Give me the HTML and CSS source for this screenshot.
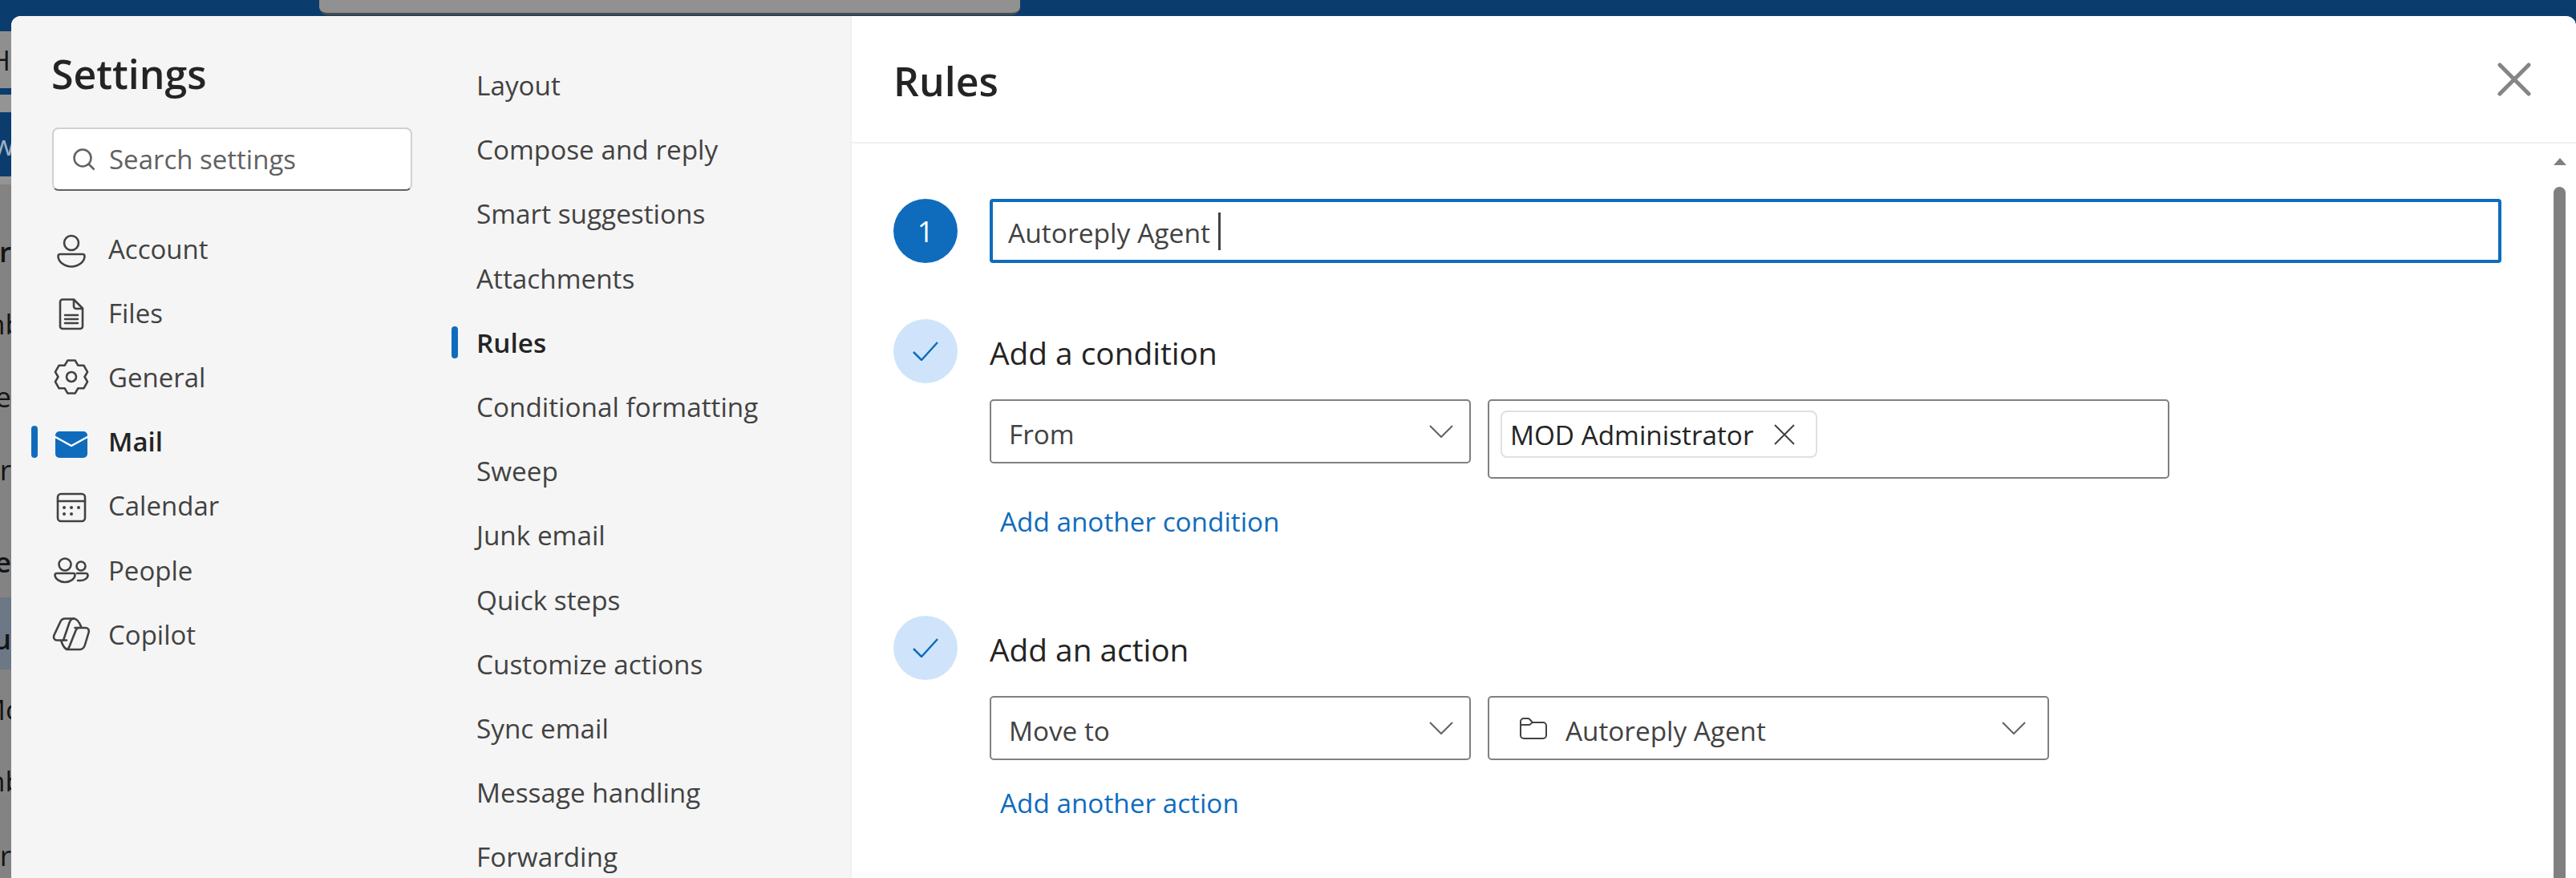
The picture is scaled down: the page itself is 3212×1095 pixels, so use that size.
FILE: index.html
```html
<!DOCTYPE html>
<html lang="en">

<head>
    <title>Settings - Rules</title>
    <meta name="viewport" content="width=device-width, initial-scale=1" />
    <link rel="stylesheet" href="styles.css">
</head>

<body>
    <div class="topbar">
        <div class="topbar-search"></div>
    </div>

    <div class="page">
        <div class="strip">
            <div class="band band-blue band-top"></div>
            <div class="band band-grey band-head"><span class="cut-none">H</span></div>
            <div class="band band-blue band-thin"></div>
            <div class="band band-pale band-gap"></div>
            <div class="band band-blue band-ribbon"><span class="ribbon-text">w</span></div>
            <div class="band band-pale band-under"></div>
            <div class="strip-spacer"></div>
            <div class="strip-row row-r"><span class="sender">r</span></div>
            <div class="strip-row row-90"><span class="cut-b">nb</span></div>
            <div class="strip-row row-92"><span>e</span></div>
            <div class="strip-row row-90"><span>Pr</span></div>
            <div class="strip-row row-e"><span class="sender">e</span></div>
            <div class="strip-row row-selected"><span class="sender">Au</span></div>
            <div class="strip-row row-98"><span class="cut-o">Mo</span></div>
            <div class="strip-row row-80"><span class="cut-b">nb</span></div>
            <div class="strip-row row-last"><span>Pr</span></div>
        </div>

        <div class="modal">
            <div class="nav-main">
                <h1 class="nav-title">Settings</h1>
                <div class="search">
                    <svg class="search-icon" viewBox="0 0 28 28" width="28" height="28">
                        <circle cx="12" cy="12" r="10.5" />
                        <path d="M19.5 19.5 L26.5 26.5" />
                    </svg>
                    <span>Search settings</span>
                </div>
                <div class="nav-list">
                    <div class="nav-item">
                        <svg class="nav-icon" viewBox="0 0 48 48" width="48" height="48">
                            <circle cx="24" cy="17" r="9" />
                            <path d="M10 31 H38 A2.5 2.5 0 0 1 40.5 33.5 C40.5 41 32 46.5 24 46.5 S7.5 41 7.5 33.5 A2.5 2.5 0 0 1 10 31 Z" />
                        </svg>
                        <span>Account</span>
                    </div>
                    <div class="nav-item">
                        <svg class="nav-icon" viewBox="0 0 48 48" width="48" height="48">
                            <path d="M13 7.5 H27 L38 18.5 V41 A3 3 0 0 1 35 44 H13 A3 3 0 0 1 10 41 V10.5 A3 3 0 0 1 13 7.5 Z" />
                            <path d="M27 8 V16 A3 3 0 0 0 30 19 H38" />
                            <path d="M16 27 H32 M16 32 H32 M16 37 H32" />
                        </svg>
                        <span>Files</span>
                    </div>
                    <div class="nav-item">
                        <svg class="nav-icon" viewBox="0 0 48 48" width="48" height="48">
                            <polygon points="19.28,3.54 28.72,3.54 32.25,9.71 39.36,9.68 44.08,17.86 40.5,24 44.08,30.14 39.36,38.32 32.25,38.29 28.72,44.46 19.28,44.46 15.75,38.29 8.64,38.32 3.92,30.14 7.5,24 3.92,17.86 8.64,9.68 15.75,9.71" />
                            <circle cx="24" cy="24" r="6" />
                        </svg>
                        <span>General</span>
                    </div>
                    <div class="nav-item nav-item-active">
                        <span class="active-bar"></span>
                        <svg class="nav-icon" viewBox="0 0 48 48" width="48" height="48">
                            <rect class="mail-body" x="4" y="11" width="40" height="33" rx="5" />
                            <path class="mail-flap" d="M4 18 L24 29 L44 18" />
                        </svg>
                        <span>Mail</span>
                    </div>
                    <div class="nav-item">
                        <svg class="nav-icon" viewBox="0 0 48 48" width="48" height="48">
                            <rect x="7" y="9" width="34" height="34" rx="4" />
                            <path d="M7 18 H41" />
                            <g class="dots">
                                <circle cx="15" cy="26" r="2" />
                                <circle cx="24" cy="26" r="2" />
                                <circle cx="33" cy="26" r="2" />
                                <circle cx="15" cy="34" r="2" />
                                <circle cx="24" cy="34" r="2" />
                            </g>
                        </svg>
                        <span>Calendar</span>
                    </div>
                    <div class="nav-item">
                        <svg class="nav-icon" viewBox="0 0 48 48" width="48" height="48">
                            <circle cx="16" cy="17" r="7.5" />
                            <path d="M5.5 28 H26.5 A2 2 0 0 1 28.5 30 C28.5 35 22.5 39 16 39 S3.5 35 3.5 30 A2 2 0 0 1 5.5 28 Z" />
                            <circle cx="36" cy="19" r="5.5" />
                            <path d="M31 28 H42 A2.5 2.5 0 0 1 44.5 30.5 C44.5 34.5 39.5 37 35.5 37 H32" />
                        </svg>
                        <span>People</span>
                    </div>
                    <div class="nav-item">
                        <svg class="nav-icon" viewBox="0 0 48 48" width="48" height="48">
                            <path d="M36.5 15.5 C34 9 31 4.5 27 4.5 H16 C13 4.5 11 6.5 10 9 L2.5 25 C1 28.5 3 31.5 6 31.5 H18" />
                            <path d="M27 4.5 C24 4.5 22.5 7 21.5 9.5 L14 31.5" />
                            <path d="M28.5 16 H42 C45 16 46.5 19 45.5 22 L41 37 C40 40.5 38 43 34.5 43 H20 C16 43 13.5 39 11.5 33" />
                            <path d="M33 16 C31 16 30 18 29 20.5 L22 38 C21 41 19.5 43 18 43" />
                        </svg>
                        <span>Copilot</span>
                    </div>
                </div>
            </div>

            <div class="nav-sub">
                <div class="sub-item">Layout</div>
                <div class="sub-item">Compose and reply</div>
                <div class="sub-item">Smart suggestions</div>
                <div class="sub-item">Attachments</div>
                <div class="sub-item sub-item-active"><span class="active-bar"></span>Rules</div>
                <div class="sub-item">Conditional formatting</div>
                <div class="sub-item">Sweep</div>
                <div class="sub-item">Junk email</div>
                <div class="sub-item">Quick steps</div>
                <div class="sub-item">Customize actions</div>
                <div class="sub-item">Sync email</div>
                <div class="sub-item">Message handling</div>
                <div class="sub-item">Forwarding</div>
            </div>

            <div class="panel">
                <div class="panel-header">
                    <h2 class="panel-title">Rules</h2>
                    <svg class="close-icon" viewBox="0 0 42 42" width="42" height="42">
                        <path d="M3 3 L39 39 M39 3 L3 39" />
                    </svg>
                </div>
                <div class="panel-body">
                    <div class="rule-form">
                        <div class="step-head">
                            <div class="step-circle step-circle-current">1</div>
                            <div class="name-input"><span class="name-text">Autoreply Agent</span><span class="caret"></span></div>
                        </div>

                        <div class="step-head step-spaced">
                            <div class="step-circle">
                                <svg class="check-icon" viewBox="0 0 32 24" width="32" height="24">
                                    <path d="M1 13 L11 23 L31 1" />
                                </svg>
                            </div>
                            <div class="step-title">Add a condition</div>
                        </div>
                        <div class="step-fields">
                            <div class="select select-type">
                                <span class="select-text">From</span>
                                <svg class="chevron" viewBox="0 0 30 16" width="30" height="16"><path d="M1 1 L15 15 L29 1" /></svg>
                            </div>
                            <div class="people-box">
                                <div class="chip">
                                    <span>MOD Administrator</span>
                                    <svg class="chip-close" viewBox="0 0 26 26" width="26" height="26"><path d="M1 1 L25 25 M25 1 L1 25" /></svg>
                                </div>
                            </div>
                        </div>
                        <a class="add-link" href="#">Add another condition</a>

                        <div class="step-head step-spaced-lg">
                            <div class="step-circle">
                                <svg class="check-icon" viewBox="0 0 32 24" width="32" height="24">
                                    <path d="M1 13 L11 23 L31 1" />
                                </svg>
                            </div>
                            <div class="step-title">Add an action</div>
                        </div>
                        <div class="step-fields">
                            <div class="select select-type">
                                <span class="select-text">Move to</span>
                                <svg class="chevron" viewBox="0 0 30 16" width="30" height="16"><path d="M1 1 L15 15 L29 1" /></svg>
                            </div>
                            <div class="select select-folder">
                                <svg class="folder-icon" viewBox="0 0 34 28" width="34" height="28">
                                    <path d="M1 6 A4 4 0 0 1 5 2 H10 A3 3 0 0 1 12 2.8 L16 7 H29 A4 4 0 0 1 33 11 V23 A4 4 0 0 1 29 27 H5 A4 4 0 0 1 1 23 Z" />
                                    <path d="M1 10 H12 L16 7" />
                                </svg>
                                <span class="select-text folder-name">Autoreply Agent</span>
                                <svg class="chevron" viewBox="0 0 30 16" width="30" height="16"><path d="M1 1 L15 15 L29 1" /></svg>
                            </div>
                        </div>
                        <a class="add-link" href="#">Add another action</a>
                    </div>
                    <div class="scrollbar">
                        <div class="scroll-arrow"></div>
                        <div class="scroll-thumb"></div>
                    </div>
                </div>
            </div>
        </div>
    </div>
</body>

</html>
```

FILE: styles.css
```css
* {
    box-sizing: border-box;
}

html,
body {
    margin: 0;
    height: 100%;
}

body {
    width: 3212px;
    height: 1095px;
    overflow: hidden;
    background: #0a3d6e;
    font-family: "Open Sans", "Noto Sans", sans-serif;
    font-size: 33px;
    color: #424242;
}

h1,
h2 {
    margin: 0;
    font-weight: 600;
    color: #242424;
}

svg {
    flex: none;
    fill: none;
}

/* dimmed app behind the dialog */
.topbar {
    height: 20px;
    padding-left: 398px;
}

.topbar-search {
    width: 874px;
    height: 19px;
    background: #919191;
    border-bottom: 3px solid #4a4a4a;
    border-radius: 0 0 10px 10px;
}

.page {
    display: flex;
    height: 1075px;
}

.strip {
    display: flex;
    flex-direction: column;
    flex: none;
    width: 14px;
    overflow: hidden;
    background: #838383;
    color: #141414;
    font-size: 35px;
}

.band {
    display: flex;
    align-items: center;
    justify-content: flex-end;
    flex: none;
}

.band-blue {
    background: #0a3d6e;
}

.band-grey {
    background: #8f8f8f;
}

.band-pale {
    background: #949494;
}

.band-top {
    height: 19px;
}

.band-head {
    height: 71px;
}

.band-thin {
    height: 8px;
}

.band-gap {
    height: 22px;
}

.band-ribbon {
    height: 80px;
    color: #9fb0c0;
}

.band-under {
    height: 10px;
}

.strip-spacer {
    flex: none;
    height: 38px;
}

.strip-row {
    display: flex;
    align-items: center;
    justify-content: flex-end;
    flex: none;
    white-space: nowrap;
}

.row-r,
.row-90 {
    height: 90px;
}

.row-92 {
    height: 92px;
}

.row-e {
    height: 89px;
    margin-top: 26px;
}

.row-selected {
    height: 90px;
    padding-top: 12px;
    background: #6d7886;
}

.row-98 {
    height: 98px;
}

.row-80 {
    height: 80px;
}

.row-last {
    height: 106px;
}

.sender {
    font-weight: 600;
}

.cut-b {
    margin-right: -14px;
}

.cut-o {
    margin-right: -14px;
}

.cut-none {
    margin-right: 1px;
}

.ribbon-text {
    margin-right: -4px;
}

/* dialog */
.modal {
    display: flex;
    flex: 1;
    overflow: hidden;
    background: #fff;
    border-radius: 12px 12px 0 0;
}

.nav-main {
    flex: none;
    width: 549px;
    background: #f5f5f5;
}

.nav-title {
    height: 60px;
    margin: 42px 0 0 50px;
    font-size: 50px;
    line-height: 60px;
}

.search {
    display: flex;
    align-items: center;
    gap: 17px;
    width: 449px;
    height: 79px;
    margin: 37px 0 0 51px;
    padding-left: 24px;
    background: #fff;
    border: 2px solid #d1d1d1;
    border-bottom-color: #616161;
    border-radius: 8px;
    color: #616161;
}

.search-icon {
    stroke: #616161;
    stroke-width: 2.5;
}

.nav-list {
    margin-top: 32px;
}

.nav-item {
    position: relative;
    display: flex;
    align-items: center;
    gap: 22px;
    height: 80.2px;
    padding-left: 51px;
}

.nav-icon {
    stroke: #424242;
    stroke-width: 2.6;
    stroke-linejoin: round;
    stroke-linecap: round;
}

.dots {
    fill: #424242;
    stroke: none;
}

.mail-body {
    fill: #0f6cbd;
    stroke: none;
}

.mail-flap {
    stroke: #fff;
    stroke-width: 2.5;
}

.nav-item-active {
    font-weight: 600;
    color: #242424;
}

.active-bar {
    position: absolute;
    top: 20px;
    width: 8px;
    height: 40px;
    background: #0f6cbd;
    border-radius: 4px;
}

.nav-item .active-bar {
    left: 25px;
}

.nav-sub {
    flex: none;
    width: 499px;
    padding-top: 46px;
    background: #f5f5f5;
    border-right: 2px solid #f0f0f0;
    font-size: 33.3px;
}

.sub-item {
    position: relative;
    display: flex;
    align-items: center;
    height: 80.2px;
    padding-left: 31px;
    white-space: nowrap;
}

.sub-item .active-bar {
    left: 0;
}

.sub-item-active {
    font-weight: 600;
    color: #242424;
}

.panel {
    display: flex;
    flex-direction: column;
    flex: 1;
    min-width: 0;
}

.panel-header {
    display: flex;
    align-items: center;
    justify-content: space-between;
    flex: none;
    height: 159px;
    padding: 0 56px 0 52px;
    border-bottom: 2px solid #f0f0f0;
}

.panel-title {
    padding-top: 4px;
    font-size: 50px;
    line-height: 60px;
}

.close-icon {
    stroke: #858585;
    stroke-width: 5;
    stroke-linecap: round;
}

.panel-body {
    display: flex;
    flex: 1;
    min-height: 0;
    padding-right: 13px;
    font-size: 33.3px;
}

.rule-form {
    flex: 1;
    min-width: 0;
    padding: 69px 65px 0 52px;
}

.step-head {
    display: flex;
    align-items: center;
    gap: 40px;
}

.step-spaced {
    margin-top: 70px;
}

.step-spaced-lg {
    margin-top: 93px;
}

.step-circle {
    display: flex;
    align-items: center;
    justify-content: center;
    flex: none;
    width: 80px;
    height: 80px;
    background: #cfe4fa;
    border-radius: 50%;
}

.step-circle-current {
    background: #0f6cbd;
    color: #fff;
    font-size: 36px;
}

.check-icon {
    stroke: #0f6cbd;
    stroke-width: 2.5;
}

.name-input {
    display: flex;
    align-items: center;
    flex: 1;
    height: 80px;
    padding-left: 19px;
    background: #fff;
    border: 4px solid #0f6cbd;
    border-radius: 4px;
}

.name-text {
    padding-top: 4px;
    font-size: 33.6px;
}

.caret {
    width: 3px;
    height: 47px;
    margin-left: 10px;
    background: #424242;
}

.step-title {
    padding-top: 4px;
    font-size: 38.8px;
    color: #242424;
}

.step-fields {
    display: flex;
    align-items: flex-start;
    gap: 21px;
    margin: 20px 0 0 120px;
}

.select {
    display: flex;
    align-items: center;
    height: 80px;
    padding-right: 20px;
    background: #fff;
    border: 2px solid #808080;
    border-radius: 5px;
}

.select-text {
    padding-top: 5px;
}

.select-type {
    justify-content: space-between;
    width: 600px;
    padding-left: 22px;
}

.select-folder {
    width: 700px;
    padding-left: 38px;
    padding-right: 27px;
}

.folder-icon {
    stroke: #424242;
    stroke-width: 2;
    stroke-linejoin: round;
}

.folder-name {
    flex: 1;
    margin-left: 23px;
}

.chevron {
    stroke: #616161;
    stroke-width: 2;
}

.people-box {
    width: 850px;
    height: 99px;
    padding: 12px 14px;
    background: #fff;
    border: 2px solid #808080;
    border-radius: 5px;
}

.chip {
    display: inline-flex;
    align-items: center;
    justify-content: space-between;
    width: 395px;
    height: 59px;
    padding: 0 26px 0 10px;
    border: 2px solid #e0e0e0;
    border-radius: 8px;
    color: #242424;
}

.chip-close {
    stroke: #424242;
    stroke-width: 2;
}

.add-link {
    display: block;
    width: max-content;
    margin: 28px 0 0 133px;
    line-height: 50px;
    color: #0f6cbd;
    text-decoration: none;
}

.scrollbar {
    display: flex;
    flex-direction: column;
    align-items: center;
    flex: none;
    width: 15px;
    padding-top: 18px;
}

.scroll-arrow {
    flex: none;
    width: 0;
    height: 0;
    border-left: 8px solid transparent;
    border-right: 8px solid transparent;
    border-bottom: 9px solid #808080;
}

.scroll-thumb {
    flex: 1;
    width: 15px;
    margin-top: 27px;
    background: #808080;
    border-radius: 8px 8px 0 0;
}
```
